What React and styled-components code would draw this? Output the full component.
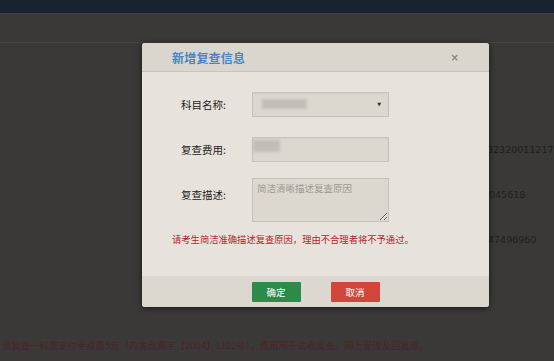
import React from 'react'
import styled, { createGlobalStyle } from 'styled-components'

const GlobalStyle = createGlobalStyle`
  html, body {
    margin: 0;
    padding: 0;
    background: #3a3937;
    font-family: "Noto Sans CJK SC", "Noto Sans", sans-serif;
  }
`

const Page = styled.div`
  position: relative;
  width: 554px;
  height: 361px;
  overflow: hidden;
  display: flex;
  flex-direction: column;
  background: #3a3937;
`
const TopBar = styled.div`
  height: 13px;
  background: #19232f;
`
const SubBar = styled.div`
  height: 28px;
  border-top: 1px solid #433e38;
  border-bottom: 1px solid #46443f;
`
const Rows = styled.div`
  padding-top: 84px;
  display: flex;
  flex-direction: column;
`
const Row = styled.div`
  height: 45px;
  display: flex;
  align-items: center;
  padding-left: ${p => p.indent}px;
  color: #1f1f1e;
  font-family: "DejaVu Sans", sans-serif;
  font-size: 9.5px;
  white-space: nowrap;
`
const Notice = styled.div`
  margin-top: 76px;
  padding-left: 2px;
  color: #4a2624;
  font-size: 9.4px;
  white-space: nowrap;
`

const Modal = styled.div`
  position: absolute;
  left: 142px;
  top: 43px;
  width: 347px;
  height: 264px;
  border-radius: 3px;
  overflow: hidden;
  background: #e7e2db;
  box-shadow: 0 1px 6px rgba(0, 0, 0, 0.6);
  display: flex;
  flex-direction: column;
`
const Header = styled.div`
  height: 28px;
  display: flex;
  align-items: center;
  justify-content: space-between;
  padding: 0 30px;
  background: #dad5cd;
  border-bottom: 1px solid #c9c4bb;
`
const Title = styled.h3`
  margin: 0;
  color: #4a84c6;
  font-size: 12px;
  font-weight: bold;
  letter-spacing: 0.2px;
`
const Close = styled.span`
  color: #8a8680;
  font-family: "DejaVu Sans", sans-serif;
  font-size: 10px;
  font-weight: bold;
`
const Body = styled.div`
  flex: 1;
  padding: 20px 0 0 30px;
  display: flex;
  flex-direction: column;
`
const Field = styled.div`
  display: grid;
  grid-template-columns: 80px 137px;
  align-items: ${p => (p.top ? 'start' : 'center')};
  margin-bottom: ${p => p.gap}px;
`
const Label = styled.label`
  padding-left: 9px;
  padding-top: ${p => (p.top ? 9 : 0)}px;
  color: #232120;
  font-size: 10.5px;
`
const Box = styled.div`
  position: relative;
  box-sizing: border-box;
  height: ${p => p.h}px;
  background: #dcd8cf;
  border: 1px solid #c8c4ba;
  box-shadow: inset 0 1px 2px rgba(0, 0, 0, 0.05);
  display: flex;
  align-items: center;
`
const Blur = styled.span`
  position: absolute;
  left: ${p => p.x}px;
  top: ${p => p.y}px;
  width: ${p => p.w}px;
  height: ${p => p.hh}px;
  background: #c2beb7;
  filter: blur(1.5px);
`
const Arrow = styled.span`
  position: absolute;
  right: 7px;
  top: 8px;
  font-family: "DejaVu Sans", sans-serif;
  font-size: 5px;
  color: #333;
`
const Area = styled.textarea`
  box-sizing: border-box;
  width: 137px;
  height: 44px;
  margin: 0;
  padding: 2px 4px;
  background: #dcd8cf;
  border: 1px solid #c6c2b8;
  border-radius: 0;
  font-family: "Noto Sans CJK SC", sans-serif;
  font-size: 9.5px;
  color: #333;
  resize: both;
  outline: none;
  &::placeholder {
    color: #9c9891;
  }
`
const Hint = styled.p`
  margin: 10px 0 0 0;
  color: #b2262b;
  font-size: 9.3px;
  white-space: nowrap;
`
const Footer = styled.div`
  height: 31px;
  display: flex;
  justify-content: center;
  align-items: center;
  gap: 30px;
  background: #dcd7cf;
`
const Button = styled.button`
  width: 49px;
  height: 20px;
  padding: 0;
  border: none;
  border-radius: 1px;
  background: ${p => p.bg};
  color: #fff;
  font-family: "Noto Sans CJK SC", sans-serif;
  font-size: 9.5px;
`

export default function App() {
  return (
    <Page>
      <GlobalStyle />
      <TopBar />
      <SubBar />
      <Rows>
        <Row indent={487}>32320011217</Row>
        <Row indent={489}>045618</Row>
        <Row indent={488}>47496960</Row>
      </Rows>
      <Notice>
        请复查一科需支付手续费5元（内发改费字【2004】1122号），费用用于试卷复查、网上受理及回复等。
      </Notice>

      <Modal>
        <Header>
          <Title>新增复查信息</Title>
          <Close>×</Close>
        </Header>
        <Body>
          <Field gap={20}>
            <Label>科目名称:</Label>
            <Box h={25}>
              <Blur x={9} y={6} w={45} hh={10} />
              <Arrow>▼</Arrow>
            </Box>
          </Field>
          <Field gap={16}>
            <Label>复查费用:</Label>
            <Box h={25}>
              <Blur x={0} y={2} w={27} hh={12} />
            </Box>
          </Field>
          <Field top gap={0}>
            <Label top>复查描述:</Label>
            <Area placeholder="简洁清晰描述复查原因" />
          </Field>
          <Hint>请考生简洁准确描述复查原因，理由不合理者将不予通过。</Hint>
        </Body>
        <Footer>
          <Button bg="#2d8a49">确定</Button>
          <Button bg="#d1463a">取消</Button>
        </Footer>
      </Modal>
    </Page>
  )
}
